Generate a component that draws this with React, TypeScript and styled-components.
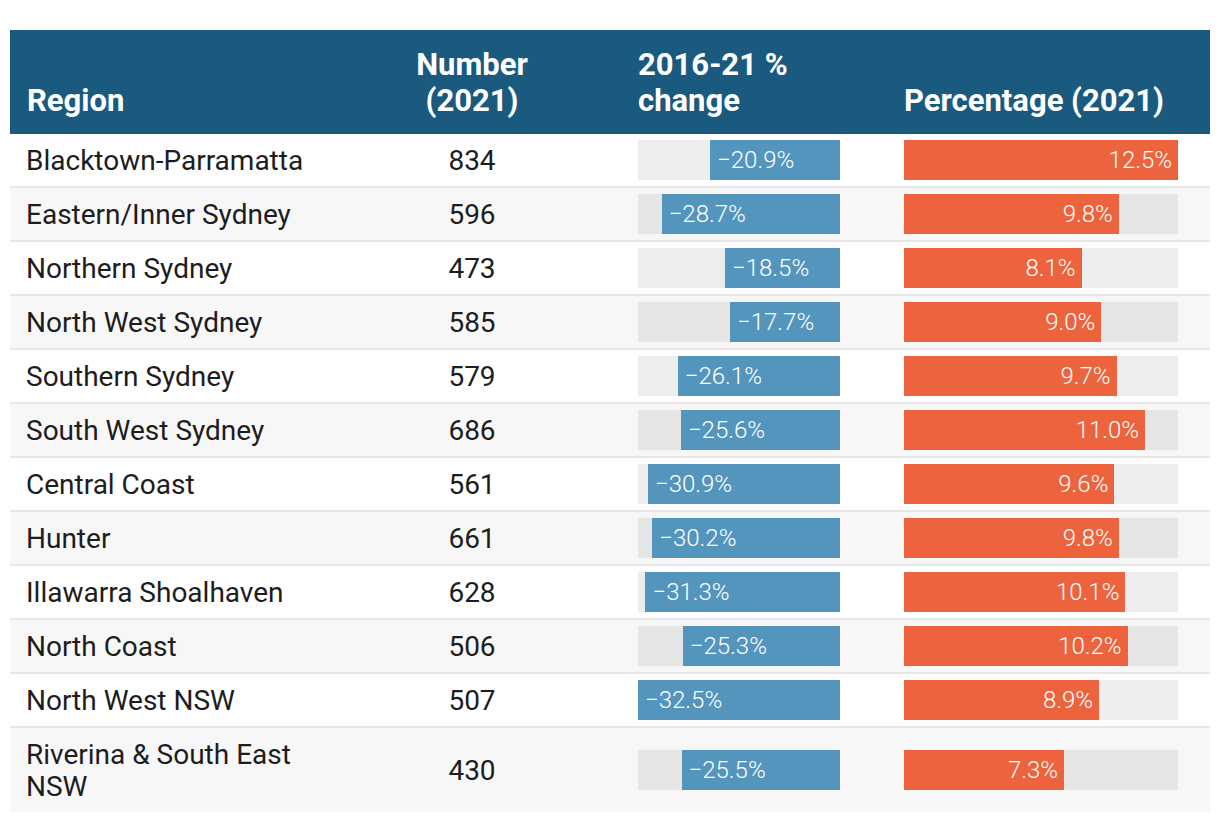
import styled, { createGlobalStyle } from "styled-components";

const GlobalStyle = createGlobalStyle`
    body {
        margin: 0;
        background: #ffffff;
        font-family: Roboto, "Liberation Sans", sans-serif;
    }
`;

const rows = [
    { region: "Blacktown-Parramatta", number: 834, change: -20.9, pct: 12.5 },
    { region: "Eastern/Inner Sydney", number: 596, change: -28.7, pct: 9.8 },
    { region: "Northern Sydney", number: 473, change: -18.5, pct: 8.1 },
    { region: "North West Sydney", number: 585, change: -17.7, pct: 9.0 },
    { region: "Southern Sydney", number: 579, change: -26.1, pct: 9.7 },
    { region: "South West Sydney", number: 686, change: -25.6, pct: 11.0 },
    { region: "Central Coast", number: 561, change: -30.9, pct: 9.6 },
    { region: "Hunter", number: 661, change: -30.2, pct: 9.8 },
    { region: "Illawarra Shoalhaven", number: 628, change: -31.3, pct: 10.1 },
    { region: "North Coast", number: 506, change: -25.3, pct: 10.2 },
    { region: "North West NSW", number: 507, change: -32.5, pct: 8.9 },
    { region: "Riverina & South East NSW", number: 430, change: -25.5, pct: 7.3 },
];

const MAX_CHANGE = 32.5;
const MAX_PCT = 12.5;

const Page = styled.div`
    padding: 30px 10px 10px;
`;

const Table = styled.div`
    width: 1200px;
`;

const gridCols = `
    display: grid;
    grid-template-columns: 279px 204px 202px 274px;
    column-gap: 64px;
    padding-left: 17px;
    padding-right: 32px;
`;

const HeaderRow = styled.div`
    ${gridCols}
    background: #1b5a7f;
    color: #ffffff;
    font-weight: 700;
    font-size: 31px;
    line-height: 36px;
    padding-top: 17px;
    padding-bottom: 15px;
    align-items: end;
`;

const HeadCell = styled.div<{ $center?: boolean }>`
    text-align: ${p => (p.$center ? "center" : "left")};
    white-space: nowrap;
`;

const Row = styled.div<{ $alt: boolean; $last: boolean }>`
    ${gridCols}
    align-items: center;
    background: ${p => (p.$alt ? "#f7f7f7" : "#ffffff")};
    border-bottom: ${p => (p.$last ? "none" : "2px solid #e6e6e6")};
    font-size: 28px;
    line-height: 32px;
    color: #1d1d1d;
`;

const RegionCell = styled.div`
    padding: 11px 0 9px;
    margin-left: -1px;
`;

const NumberCell = styled.div`
    padding: 11px 0 9px;
    text-align: center;
`;

const Track = styled.div<{ $align: "left" | "right" }>`
    height: 40px;
    margin: 6px 0;
    background: rgba(0, 0, 0, 0.07);
    display: flex;
    justify-content: ${p => (p.$align === "right" ? "flex-end" : "flex-start")};
`;

const Fill = styled.div<{ $color: string; $textAlign: "left" | "right" }>`
    height: 100%;
    background: ${p => p.$color};
    color: #ffffff;
    font-size: 24px;
    font-weight: 300;
    line-height: 40px;
    white-space: nowrap;
    text-align: ${p => p.$textAlign};
    padding: 0 6px 0 7px;
    box-sizing: border-box;
`;

const fmtChange = (v: number) => `\u2212${Math.abs(v).toFixed(1)}%`;

const App = () => (
    <Page>
        <GlobalStyle />
        <Table>
            <HeaderRow>
                <HeadCell>Region</HeadCell>
                <HeadCell $center>Number<br />(2021)</HeadCell>
                <HeadCell>2016-21 %<br />change</HeadCell>
                <HeadCell>Percentage (2021)</HeadCell>
            </HeaderRow>
            {rows.map((r, i) => (
                <Row key={r.region} $alt={i % 2 === 1} $last={i === rows.length - 1}>
                    <RegionCell>{r.region}</RegionCell>
                    <NumberCell>{r.number}</NumberCell>
                    <Track $align="right">
                        <Fill
                            $color="#5495bd"
                            $textAlign="left"
                            style={{ width: `${(Math.abs(r.change) / MAX_CHANGE) * 100}%` }}
                        >
                            {fmtChange(r.change)}
                        </Fill>
                    </Track>
                    <Track $align="left">
                        <Fill
                            $color="#ec633d"
                            $textAlign="right"
                            style={{ width: `${(r.pct / MAX_PCT) * 100}%` }}
                        >
                            {r.pct.toFixed(1)}%
                        </Fill>
                    </Track>
                </Row>
            ))}
        </Table>
    </Page>
);

export default App;
